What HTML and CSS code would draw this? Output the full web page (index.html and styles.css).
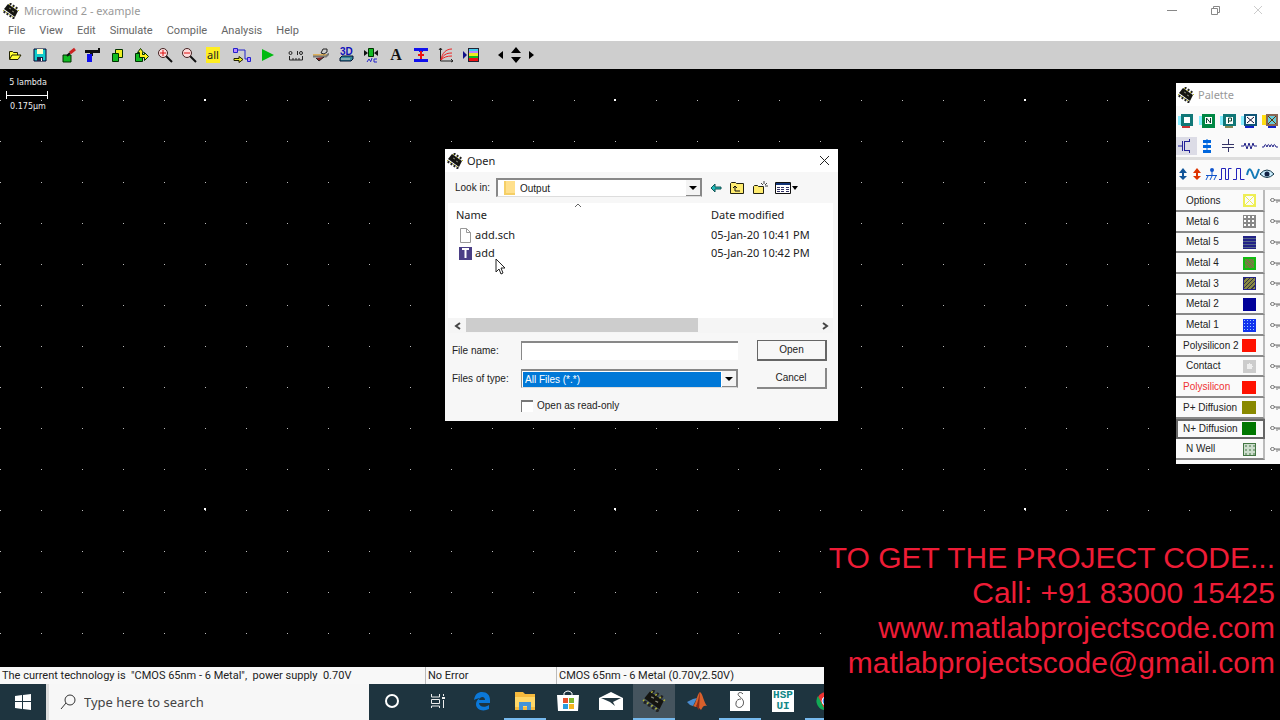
FILE: index.html
```html
<!DOCTYPE html>
<html lang="en">
<head>
    <meta charset="UTF-8">
    <meta name="viewport" content="width=device-width, initial-scale=1.0">
    <title>Microwind 2 - example</title>
    <link rel="stylesheet" href="styles.css">
</head>
<body>
    <svg class="defs" aria-hidden="true">
        <symbol id="chip" viewBox="0 0 16 16">
            <path d="M5 1l10 7-3 6L1 6z" fill="#141410"/>
            <path d="M7 2l1-2M10 4l1-2M13 6l1-2M2 8l-1 2M5 10l-1 2M8 12l-1 2M11 14l-1 2" stroke="#222" stroke-width="2"/>
            <path d="M6 2l1-1M9 4l1-1M12 6l1-1M15 8l1-1M1 7l-1 1M4 9l-1 1M7 11l-1 1M10 13l-1 1" stroke="#b9b92c"/>
            <path d="M6 5l2 1M9 8l2 1" stroke="#8a8a7a"/>
        </symbol>
        <symbol id="key" viewBox="0 0 10 8">
            <path d="M4 3h6M7 3v3M9 3v2" stroke="#777" fill="none"/>
            <ellipse cx="2.5" cy="3" rx="2" ry="1.500" stroke="#777" fill="none"/>
        </symbol>
    </svg>

    <div class="app">
        <div class="title-bar">
            <svg class="chip"><use href="#chip"/></svg>
            <span class="title">Microwind 2 - example</span>
            <div class="window-buttons">
                <button aria-label="Minimize"><svg width="11" height="11"><path d="M0 5.500h10" stroke="#888"/></svg></button>
                <button aria-label="Restore"><svg width="11" height="11" fill="none" stroke="#888"><path d="M1.500 3.500h6v6h-6zM3.500 3v-1.500h6v6H8"/></svg></button>
                <button aria-label="Close"><svg width="11" height="11"><path d="M1 1l8 8M9 1l-8 8" stroke="#ccc"/></svg></button>
            </div>
        </div>

        <nav class="menu-bar">
            <button>File</button>
            <button>View</button>
            <button>Edit</button>
            <button>Simulate</button>
            <button>Compile</button>
            <button>Analysis</button>
            <button>Help</button>
        </nav>

        <div class="toolbar">
            <div class="tools spaced">
                <button aria-label="Open"><svg viewBox="0 0 16 16"><path d="M2.500 12V4.500h3l1 1h4V8M2.500 12.500L5 8h9l-3 4.500z" fill="#ff3" stroke="#220"/></svg></button>
                <button aria-label="Save"><svg viewBox="0 0 16 16"><path d="M2 2h12v12H2z" fill="#1cc" stroke="#003"/><path d="M5 2h6v5H5z" fill="#ffc"/><path d="M5 10h6v4H5z" fill="#224"/><path d="M9 11h1v3H9z" fill="#fff"/></svg></button>
            </div>
            <div class="tools">
                <button aria-label="Draw box"><svg viewBox="0 0 16 16"><path d="M2 8h8v7H2z" fill="#1b2" stroke="#030"/><path d="M6 9l3-3" stroke="#111" stroke-width="2"/><path d="M9 6l5-4" stroke="#c22" stroke-width="3"/></svg></button>
                <button aria-label="Delete"><svg viewBox="0 0 16 16"><path d="M0 3h13V1h2v5H8v3H5V6H0z" fill="#111"/><path d="M2 7h5v8H2z" fill="#11e"/></svg></button>
                <button aria-label="Copy"><svg viewBox="0 0 16 16" stroke="#030"><path d="M6.500 2.500h7v8h-7z" fill="#ee2"/><path d="M3.500 6.500h6v8h-6z" fill="#1b2"/></svg></button>
                <button aria-label="Move"><svg viewBox="0 0 16 16" stroke="#030"><path d="M2.500 6.500h7v8h-7z" fill="#1b2"/><path d="M6.500 10.500v-5h-2l3-4 3 4h-1v2h2v-2l4 4-4 4v-3z" fill="#fe2"/></svg></button>
                <button aria-label="Zoom in"><svg viewBox="0 0 16 16"><path d="M9 9l6 6" stroke="#111" stroke-width="2"/><circle cx="6" cy="6" r="4.500" fill="#fdd" stroke="#422"/><path d="M3 6h6M6 3v6" stroke="#d11"/></svg></button>
                <button aria-label="Zoom out"><svg viewBox="0 0 16 16"><path d="M9 9l6 6" stroke="#111" stroke-width="2"/><circle cx="6" cy="6" r="4.500" fill="#fdd" stroke="#422"/><path d="M3 6h6" stroke="#d11"/></svg></button>
                <button class="view-all">all</button>
            </div>
            <div class="tools spaced">
                <button aria-label="Connect"><svg class="wide" viewBox="0 0 18 16" fill="none"><path d="M5 3h7v9h2" stroke="#22c"/><path d="M.500 1.500h4v4h-4zM14.500 10.500h3v4h-3z" fill="#b8f" stroke="#22c"/><path d="M1 11.500h5v-2l4 3-4 3v-2H1z" fill="#ee2" stroke="#220"/></svg></button>
                <button aria-label="Run"><svg viewBox="0 0 16 16"><path d="M3 2l12 6-12 6z" fill="#0b1"/></svg></button>
            </div>
            <div class="tools spaced">
                <button aria-label="Measure"><svg viewBox="0 0 16 16" fill="none" stroke="#222"><circle cx="2.500" cy="6" r="1.500"/><path d="M1.500 9v4h13V9M5 11v2M8 11v2M11 11v2M9.500 4v4"/><circle cx="13" cy="6" r="1.500"/></svg></button>
                <button aria-label="Cross section"><svg viewBox="0 0 16 16"><path d="M0 7h16l-3 3H0z" fill="#ddb05c"/><path d="M0 9.500h13l3-3" stroke="#777" stroke-width="2" fill="none"/><path d="M8 6l2-4h4v3l-3 2z" fill="#ccc" stroke="#222"/><path d="M3 11l3 3 5-4" fill="#822" stroke="#222"/></svg></button>
                <button aria-label="3D view"><svg viewBox="0 0 16 16"><path d="M2 11l2-2h11v3l-2 2H2z" fill="#389" stroke="#013"/><path d="M3 12h9" stroke="#ccc"/><text x="2" y="8" class="svg-3d">3D</text></svg></button>
                <button aria-label="Properties"><svg viewBox="0 0 16 16"><path d="M5.500 1.500h5v8h-5z" fill="#1b2" stroke="#030"/><path d="M1 3l4 3-4 3zM15 3l-4 3 4 3z" fill="#111"/><path d="M4 15l2-3 2 3M9 11l-1 3M14 12h-3v3h3" stroke="#22c" fill="none"/></svg></button>
                <button class="text-tool">A</button>
                <button aria-label="Via"><svg viewBox="0 0 16 16"><path d="M1 1h14v3h-5v1H6V4H1zM1 12h14v3H1z" fill="#11e"/><path d="M8 4v8M5 8h6" stroke="#e11" stroke-width="2"/></svg></button>
                <button aria-label="MOS curves"><svg viewBox="0 0 16 16" fill="none"><path d="M2.500 1v13H15M1 3l1.500-2L4 3M13 12l2 2-2 1" stroke="#222"/><path d="M3 13C4 6 8 2 14 2M3 13c2-5 5-7 11-7M3 13c3-3 6-4 11-4" stroke="#e22"/></svg></button>
                <button aria-label="Layers"><svg viewBox="0 0 16 16"><path d="M0 4l4 4-4 4z" fill="#118"/><path d="M5 1h11v14H5z" fill="#223"/><path d="M6 2h9v2H6z" fill="#4ce"/><path d="M6 4h9v2H6z" fill="#b8f"/><path d="M6 6h9v3H6z" fill="#ee2"/><path d="M6 9h9v2H6z" fill="#1b2"/><path d="M6 11h9v3H6z" fill="#e11"/></svg></button>
            </div>
            <div class="tools arrows">
                <button aria-label="Left"><svg viewBox="0 0 16 16"><path d="M11 4v8L6 8z"/></svg></button>
                <button aria-label="Up and down"><svg viewBox="0 0 16 16"><path d="M3 6l5-6 5 6zM3 10h10l-5 6z"/></svg></button>
                <button aria-label="Right"><svg viewBox="0 0 16 16"><path d="M5 4v8l5-4z"/></svg></button>
            </div>
        </div>

        <main class="canvas">
            <div class="scale">
                <span>5 lambda</span>
                <div class="ruler"></div>
                <span>0.175µm</span>
            </div>
        </main>

        <footer class="status-bar">
            <span class="technology">The current technology is &nbsp;"CMOS 65nm - 6 Metal", &nbsp;power supply &nbsp;0.70V</span>
            <span class="errors">No Error</span>
            <span>CMOS 65nm - 6 Metal (0.70V,2.50V)</span>
        </footer>

        <div class="taskbar">
            <button class="start" aria-label="Start"><svg width="16" height="16" fill="#fff"><path d="M0 2l7-1v6H0zM8 1l8-1v7H8zM0 8h7v7l-7-1zM8 8h8v8l-8-1z"/></svg></button>
            <label class="search">
                <svg width="16" height="16" fill="none" stroke="#333"><circle cx="10" cy="6" r="5"/><path d="M6 9l-5 6"/></svg>
                <input type="text" placeholder="Type here to search">
            </label>
            <div class="task-items">
                <button class="system" aria-label="Cortana"><svg width="16" height="16"><circle cx="8" cy="8" r="6" fill="none" stroke="#fff" stroke-width="2"/></svg></button>
                <button class="system" aria-label="Task view"><svg width="16" height="16" fill="none" stroke="#eee"><path d="M1.500 1v3h8V1M1.500 6.500h8v4h-8zM1.500 15v-2h8v2M13.500 1v2M13.500 7v8"/><path d="M12 5h3" stroke-width="2"/></svg></button>
                <button aria-label="Edge"><svg width="18" height="20" viewBox="0 0 18 20"><path d="M1 9C2 3 5 1 9 1c5 0 8 3 8 8v3H6c0 4 6 5 10 2v4c-6 3-13 1-13-5 0-3 2-5 4-6-2 0-4 1-6 2zM6 9h6c0-4-5-4-6 0z" fill="#0b78d8"/></svg></button>
                <button class="running" aria-label="File Explorer"><svg width="22" height="20"><path d="M1 1h8l2 2h10v16H1z" fill="#f6ba3d"/><path d="M1 6h20v10H1z" fill="#ffd767"/><path d="M5 19v-8h12v8h-4v-4H9v4z" fill="#4193d8"/></svg></button>
                <button aria-label="Store"><svg width="22" height="22"><path d="M7 6V3q4-4 8 0v3" fill="none" stroke="#fff" stroke-width="1"/><path d="M0 5h22l-1 16H1z" fill="#fff"/><path d="M6 8h5v5H6z" fill="#e8502c"/><path d="M12 8h5v5h-5z" fill="#7db72f"/><path d="M6 14h5v5H6z" fill="#2a9de0"/><path d="M12 14h5v5h-5z" fill="#f5b51f"/></svg></button>
                <button aria-label="Mail"><svg width="24" height="20"><path d="M0 7l12-6 12 6v12H0z" fill="#fff"/><path d="M2 7h20l-8 4 2 4-5-4z" fill="#223640"/></svg></button>
                <button class="running active" aria-label="Microwind"><svg width="24" height="22"><use href="#chip" width="24" height="22"/></svg></button>
                <button aria-label="Matlab"><svg width="20" height="20"><path d="M0 11l6-3 4-1-4 8-3-1z" fill="#4a8bd0"/><path d="M6 15c3-2 4-12 7-14 3 2 4 11 7 14-3-1-4 0-6 4-2-2-3-4-5-3z" fill="#d8602c"/><path d="M9 15c2-3 3-11 4-14l-1 18z" fill="#8c2d18"/></svg></button>
                <button class="running" aria-label="Editor"><svg width="22" height="22"><path d="M1 1h20v20H1z" fill="#fff"/><path d="M14 4c-2-3-7-1-4 2 5 4 5 6 4 9-2 4-8 3-7-2 0-3 3-4 5-4" stroke="#555" fill="none"/></svg></button>
                <button aria-label="HSPUI"><span class="hspui">HSP<br>UI</span></button>
                <button class="running" aria-label="Chrome"><svg width="20" height="20"><circle cx="10" cy="10" r="9" fill="#e33"/><path d="M2 5l6 12 2 2A9 9 0 0 1 2 5z" fill="#1a5"/><circle cx="10" cy="10" r="4" fill="#48e" stroke="#fff"/></svg></button>
            </div>
        </div>
    </div>

    <section class="palette">
        <div class="palette-title">
            <svg class="chip"><use href="#chip"/></svg>
            <span>Palette</span>
        </div>
        <div class="icons generators">
            <button aria-label="Contact"><svg viewBox="0 0 16 16"><path d="M0 3h4v9H0z" fill="#8ef"/><path d="M4 13h8v2H4z" fill="#c33"/><path d="M3 1h12v12H3z" fill="#177"/><path d="M6 4h6v6H6z" fill="#fff"/></svg></button>
            <button aria-label="N contact"><svg viewBox="0 0 16 16"><path d="M0 3h4v9H0z" fill="#8ef"/><path d="M3 1h13v14H3z" fill="#084"/><path d="M6 4h7v7H6z" fill="#fff"/><path d="M7.500 10V5l4 5V5" stroke="#143" fill="none"/></svg></button>
            <button aria-label="P contact"><svg viewBox="0 0 16 16"><path d="M0 3h4v9H0z" fill="#8ef"/><path d="M5 13h8v2H5z" fill="#885"/><path d="M3 1h13v12H3z" fill="#177"/><path d="M6 4h7v7H6z" fill="#fff"/><path d="M8.500 10V5h3v3h-3" stroke="#143" fill="none"/></svg></button>
            <button aria-label="Via"><svg viewBox="0 0 16 16"><path d="M0 3h4v9H0z" fill="#8ef"/><path d="M4 12h9v3H4z" fill="#12c"/><path d="M3 1h13v12H3z" fill="#157"/><path d="M5 3h9v8H5z" fill="#fff"/><path d="M6 4l7 6M13 4l-7 6" stroke="#113"/></svg></button>
            <button aria-label="Stacked via"><svg viewBox="0 0 16 16"><path d="M0 2h8v10H0z" fill="#fd1"/><path d="M6 12h8v3H6z" fill="#12c"/><path d="M4 1h12v12H4z" fill="#865"/><path d="M6 3h8v8H6z" fill="#6cd"/><path d="M6 3l8 8M14 3l-8 8" stroke="#630"/></svg></button>
        </div>
        <div class="icons devices">
            <button class="selected" aria-label="MOS"><svg viewBox="0 0 16 16"><path d="M0 8h4M4.500 3v10M6.500 3v10M7 3.500h5M7 12.500h5M11.500 1v3M11.500 12v3" fill="none" stroke="#229"/></svg></button>
            <button aria-label="Resistor"><svg viewBox="0 0 16 16"><path d="M4 2h8v3H4zM4 7h8v3H4zM4 12h8v3H4z" fill="#06d"/><path d="M8 1v14" stroke="#06d"/></svg></button>
            <button aria-label="Capacitor"><svg viewBox="0 0 16 16"><path d="M8.500 1v5M2 6.500h12M2 9.500h12M8.500 9v5" stroke="#336"/></svg></button>
            <button aria-label="Resistance"><svg viewBox="0 0 16 16"><path d="M0 8h3l1-3 2 6 2-6 2 6 2-6 1 3h3" stroke="#228" fill="none"/></svg></button>
            <button aria-label="Inductor"><svg viewBox="0 0 16 16"><path d="M0 9h2q1-5 3 0 1-5 3 0 1-5 3 0 1-5 3 0h2" stroke="#228" fill="none"/></svg></button>
        </div>
        <div class="icons sources">
            <button aria-label="Vdd minus"><svg viewBox="0 0 14 14"><path d="M7 1l4 5H3zM7 13l4-4H3z" fill="#159"/><path d="M7 5v6" stroke="#159" stroke-width="2"/></svg></button>
            <button aria-label="Vdd"><svg viewBox="0 0 14 14"><path d="M7 1l4 5H3zM7 13l4-4H3z" fill="#d30"/><path d="M7 5v6" stroke="#d30" stroke-width="2"/></svg></button>
            <button aria-label="Ground"><svg viewBox="0 0 14 14"><circle cx="8" cy="3" r="2" fill="#15c"/><path d="M8 4v5M2 8.500h11M4 9l-2 4M8 9l-2 4M12 9l-2 4" stroke="#15c"/></svg></button>
            <button aria-label="Clock"><svg viewBox="0 0 14 14"><path d="M1 12.500h2.500v-11h4v11h3v-11h3" stroke="#22b" fill="none"/></svg></button>
            <button aria-label="Pulse"><svg viewBox="0 0 14 14"><path d="M1 12.500h3.500v-11h4v11h4" stroke="#22b" fill="none"/></svg></button>
            <button aria-label="Sinus"><svg viewBox="0 0 14 14"><path d="M1 8c2-9 4-6 6 0s3 3 6-6" stroke="#147bb8" stroke-width="2" fill="none"/></svg></button>
            <button aria-label="Visible"><svg viewBox="0 0 14 14"><path d="M0 7q7-8 14 0-7 7-14 0z" fill="#cef" stroke="#134"/><circle cx="7" cy="7" r="2.500" fill="#124"/></svg></button>
        </div>
        <div class="layers">
            <div class="layer options"><button>Options<i class="swatch cross"></i></button><svg class="key"><use href="#key"/></svg></div>
            <div class="layer"><button>Metal 6<i class="swatch metal6"></i></button><svg class="key"><use href="#key"/></svg></div>
            <div class="layer"><button>Metal 5<i class="swatch metal5"></i></button><svg class="key"><use href="#key"/></svg></div>
            <div class="layer"><button>Metal 4<i class="swatch metal4"></i></button><svg class="key"><use href="#key"/></svg></div>
            <div class="layer"><button>Metal 3<i class="swatch metal3"></i></button><svg class="key"><use href="#key"/></svg></div>
            <div class="layer"><button>Metal 2<i class="swatch metal2"></i></button><svg class="key"><use href="#key"/></svg></div>
            <div class="layer"><button>Metal 1<i class="swatch metal1"></i></button><svg class="key"><use href="#key"/></svg></div>
            <div class="layer long"><button>Polysilicon 2<i class="swatch poly"></i></button><svg class="key"><use href="#key"/></svg></div>
            <div class="layer"><button>Contact<i class="swatch contact"></i></button><svg class="key"><use href="#key"/></svg></div>
            <div class="layer long red"><button>Polysilicon<i class="swatch poly"></i></button><svg class="key"><use href="#key"/></svg></div>
            <div class="layer long"><button>P+ Diffusion<i class="swatch pdiff"></i></button><svg class="key"><use href="#key"/></svg></div>
            <div class="layer long current"><button>N+ Diffusion<i class="swatch ndiff"></i></button><svg class="key"><use href="#key"/></svg></div>
            <div class="layer"><button>N Well<i class="swatch nwell"></i></button><svg class="key"><use href="#key"/></svg></div>
        </div>
    </section>

    <section class="dialog" role="dialog" aria-labelledby="dialog-title">
        <div class="dialog-title">
            <svg class="chip"><use href="#chip"/></svg>
            <span id="dialog-title">Open</span>
            <button aria-label="Close"><svg width="11" height="11"><path d="M1 1l9 9M10 1l-9 9" stroke="#222"/></svg></button>
        </div>
        <div class="look-in">
            <label for="folder">Look in:</label>
            <div class="combo">
                <svg width="14" height="16"><path d="M1 1h11v14H1z" fill="#f5cf66"/><path d="M3 1h9v12H3z" fill="#ffe08c"/></svg>
                <select id="folder"><option>Output</option></select>
                <span class="drop"></span>
            </div>
            <div class="folder-tools">
                <button aria-label="Back"><svg width="12" height="12"><path d="M1 6l4-4v3h6v2H5v3z" fill="#2bb" stroke="#155"/></svg></button>
                <button aria-label="Up one level"><svg width="16" height="14"><path d="M1.500 12.500v-10l1-1h4l1 1h7v10z" fill="#ffec70" stroke="#221"/><path d="M11 10H6V5M4 7l2-2 2 2" stroke="#111" fill="none"/></svg></button>
                <button aria-label="New folder"><svg width="16" height="14"><path d="M1.500 12.500v-7l1-1h3l1 1h5v7z" fill="#ffec70" stroke="#221"/><path d="M12 0v3M9 2l2 2M15 2l-2 2M13 5h3" stroke="#444"/></svg></button>
                <button aria-label="View menu"><svg width="24" height="14"><path d="M.500 1.500h15v11H.500z" fill="#fff" stroke="#111"/><path d="M1 2h14v2H1z" fill="#137"/><path d="M2 6.500h3M6 6.500h3M11 6.500h3M2 8.500h3M6 8.500h3M11 8.500h3M2 10.500h3M6 10.500h3M11 10.500h3" stroke="#336"/><path d="M17 5h6l-3 4z"/></svg></button>
            </div>
        </div>
        <div class="file-list">
            <svg class="sort" width="8" height="5"><path d="M1 4l3-3 3 3" fill="none" stroke="#666"/></svg>
            <table>
                <thead>
                    <tr><th>Name</th><th>Date modified</th></tr>
                </thead>
                <tbody>
                    <tr>
                        <td><div class="file"><svg width="13" height="15"><path d="M1.500.500h6l4 4v10h-10zM7.500.500v4h4" fill="#fff" stroke="#999"/></svg>add.sch</div></td>
                        <td>05-Jan-20 10:41 PM</td>
                    </tr>
                    <tr>
                        <td><div class="file"><svg width="13" height="15"><path d="M0 1h13v13H0z" fill="#4b3f86"/><path d="M3 3h7M6.500 3v9" stroke="#fff" stroke-width="2"/></svg>add</div></td>
                        <td>05-Jan-20 10:42 PM</td>
                    </tr>
                </tbody>
            </table>
            <div class="scroll-bar">
                <svg width="8" height="8"><path d="M6 1L2 4l4 3" fill="none" stroke="#444" stroke-width="2"/></svg>
                <div class="track"><div class="thumb"></div></div>
                <svg width="8" height="8"><path d="M2 1l4 3-4 3" fill="none" stroke="#444" stroke-width="2"/></svg>
            </div>
        </div>
        <form class="fields">
            <label for="file-name">File name:</label>
            <input type="text" id="file-name">
            <button type="button" class="push default">Open</button>
            <label for="file-type">Files of type:</label>
            <div class="combo type">
                <select id="file-type"><option>All Files (*.*)</option></select>
                <span class="drop"></span>
            </div>
            <button type="button" class="push">Cancel</button>
            <label class="read-only"><input type="checkbox">Open as read-only</label>
        </form>
        <svg class="cursor" width="12" height="18"><path d="M1 1v13l3-3 2 5 2-1-2-5h4z" fill="#fff" stroke="#222"/></svg>
    </section>

    <aside class="banner">
        TO GET THE PROJECT CODE...<br>
        Call: +91 83000 15425<br>
        www.matlabprojectscode.com<br>
        matlabprojectscode@gmail.com
    </aside>
</body>
</html>
```
FILE: styles.css
```css
* {
    box-sizing: border-box;
}
body {
    margin: 0;
    background-color: #000;
    font-family: "Noto Sans", "Open Sans", sans-serif;
    font-size: 11px;
    line-height: 16px;
    color: #222;
    overflow: hidden;
}
button, input, select {
    margin: 0;
    padding: 0;
    border: none;
    border-radius: 0;
    background: none;
    font: inherit;
    color: inherit;
}
svg {
    display: block;
    flex: none;
}
.defs {
    position: absolute;
    width: 0;
    height: 0;
}
.chip {
    width: 16px;
    height: 16px;
}
.app {
    display: flex;
    flex-direction: column;
    height: 100vh;
}

/* Title and menus */
.title-bar {
    display: flex;
    align-items: center;
    gap: 5px;
    height: 21px;
    padding-left: 3px;
    background-color: #fff;
    color: #999;
}
.window-buttons {
    display: flex;
    margin-left: auto;
}
.window-buttons button {
    display: flex;
    justify-content: center;
    width: 43px;
}
.menu-bar {
    display: flex;
    gap: 14px;
    height: 20px;
    padding-left: 8px;
    background-color: #fff;
    color: #666;
    font-family: Roboto, sans-serif;
}
.toolbar {
    display: flex;
    align-items: center;
    gap: 5px;
    height: 28px;
    padding-left: 3px;
    background-color: #cecece;
}
.tools {
    display: flex;
}
.tools.spaced {
    gap: 1px;
}
.tools button {
    display: flex;
    justify-content: center;
    align-items: center;
    width: 24px;
    height: 20px;
}
.tools svg {
    width: 16px;
    height: 16px;
}
.tools svg.wide {
    width: 18px;
}
.tools.arrows {
    margin-left: 4px;
}
.tools.arrows button {
    width: 16px;
}
.tools .view-all {
    width: 14px;
    height: 16px;
    margin: 2px 5px;
    background-color: #fe2;
}
.tools .text-tool {
    font-family: "Liberation Serif", serif;
    font-size: 16px;
    font-weight: bold;
    color: #111;
}
.svg-3d {
    font: bold 10px "Liberation Sans", sans-serif;
    fill: #11b;
}

/* Layout area: black masks leave one dot per 41px cell */
.canvas {
    flex: 1;
    background-color: #000;
    background-image:
        radial-gradient(circle at 1px 1px, #fff 1px, transparent 1px),
        linear-gradient(transparent 1px, #000 1px),
        linear-gradient(90deg, #bbb 1px, #000 1px);
    background-size: 410px 409px, 41px 41px, 41px 41px;
    background-position: 204px 30px, 41px 31px, 41px 31px;
}
.scale {
    width: 56px;
    padding-top: 6px;
    text-align: center;
    font-family: "DejaVu Sans", sans-serif;
    font-size: 8px;
    color: #eee;
}
.scale span {
    display: block;
}
.ruler {
    height: 8px;
    margin: 0 8px 0 6px;
    border: 1px solid #fff;
    border-width: 0 1px;
    background: linear-gradient(#fff, #fff) center / 100% 1px no-repeat;
}
.status-bar {
    display: flex;
    height: 17px;
    padding-left: 2px;
    background-color: #f8f8f8;
    font-family: Roboto, sans-serif;
    line-height: 18px;
}
.status-bar span {
    padding-left: 2px;
    border-left: 1px solid #bbb;
    white-space: nowrap;
}
.status-bar .technology {
    width: 423px;
    padding-left: 0;
    border: none;
}
.status-bar .errors {
    width: 131px;
}

/* Windows taskbar */
.taskbar {
    display: flex;
    height: 36px;
    background-color: #1e343f;
}
.start {
    display: flex;
    align-items: center;
    justify-content: center;
    width: 46px;
}
.search {
    display: flex;
    align-items: center;
    gap: 8px;
    width: 323px;
    padding-left: 11px;
    background-color: #f7f7f7;
    border-left: 3px solid #ddd;
}
.search input {
    flex: 1;
    min-width: 0;
    font-size: 13px;
}
.search input::placeholder {
    color: #444;
    opacity: 1;
}
.task-items {
    display: flex;
    gap: 1px;
}
.task-items button {
    display: flex;
    justify-content: center;
    align-items: center;
    width: 42px;
    border-bottom: 2px solid transparent;
}
.task-items .system {
    width: 45px;
}
.task-items .running {
    border-color: #76b9ed;
}
.task-items .active {
    background-color: #45545e;
}
.hspui {
    width: 22px;
    background-color: #fff;
    color: #188;
    font: bold 11px/11px "Liberation Mono", monospace;
}

/* Palette window */
.palette {
    position: absolute;
    top: 83px;
    right: 0;
    width: 104px;
    padding-bottom: 4px;
    background-color: #fafafa;
}
.palette-title {
    display: flex;
    align-items: center;
    gap: 4px;
    height: 23px;
    padding-left: 2px;
    background-color: #fff;
    color: #999;
}
.icons {
    display: flex;
    align-items: center;
}
.icons button {
    display: flex;
    justify-content: center;
    align-items: center;
    width: 21px;
    height: 18px;
}
.icons svg {
    width: 16px;
    height: 16px;
}
.generators {
    height: 29px;
}
.devices {
    height: 22px;
}
.devices .selected {
    background-color: #dcdce6;
}
.sources {
    height: 33px;
    border: 3px solid #ddd;
    border-width: 3px 0;
}
.sources button {
    width: 14px;
}
.sources svg {
    width: 14px;
    height: 14px;
}
.layers {
    display: grid;
    grid-template-rows: 22px;
    grid-auto-rows: 1fr;
    height: 270px;
    font-family: "Liberation Sans", sans-serif;
    font-size: 10px;
}
.layer {
    display: flex;
    align-items: center;
    gap: 5px;
    overflow: hidden;
}
.layer button {
    display: flex;
    justify-content: space-between;
    align-items: center;
    flex: none;
    width: 89px;
    height: 100%;
    padding: 1px 7px 0 10px;
    border: 1px solid #888;
    border-width: 0 2px 2px 0;
    border-right-color: #bbb;
    white-space: nowrap;
}
.layer.long button {
    padding-left: 7px;
}
.layer.red button {
    color: #e33;
}
.layer.current button {
    border: 2px solid #666;
    padding: 0 7px 0 5px;
}
.key {
    width: 10px;
    height: 8px;
}
.swatch {
    width: 13px;
    height: 13px;
}
.long .swatch {
    width: 14px;
}
.cross {
    border: 2px solid #ee5;
    background: linear-gradient(45deg, transparent 45%, #ee5 45% 55%, transparent 55%), linear-gradient(-45deg, transparent 45%, #ee5 45% 55%, transparent 55%);
}
.metal6 {
    background: radial-gradient(#fff 1px, #888 1px) 0 0 / 4px 4px;
}
.metal5 {
    background: repeating-linear-gradient(#228 0 2px, #568 2px 3px);
}
.metal4 {
    border: 2px solid #1b1;
    background: repeating-linear-gradient(45deg, #774 0 2px, #4a2 2px 3px);
}
.metal3 {
    border: 1px solid #228;
    background: repeating-linear-gradient(-45deg, #884 0 2px, #334 2px 3px);
}
.metal2 {
    background-color: #009;
}
.metal1 {
    background: radial-gradient(#9cf 1px, #13e 1px) 0 0 / 3px 3px;
}
.poly {
    background-color: #f10;
}
.contact {
    background: radial-gradient(#eee 3px, #ccc 3px);
}
.pdiff {
    background-color: #880;
}
.ndiff {
    background-color: #070;
}
.nwell {
    border: 1px solid #474;
    background: radial-gradient(#8a8 1px, #cdc 1px) 0 0 / 4px 4px;
}

/* Open dialog */
.dialog {
    position: absolute;
    top: 149px;
    left: 445px;
    width: 393px;
    padding-bottom: 7px;
    background-color: #f7f7f7;
}
.dialog-title {
    display: flex;
    align-items: center;
    gap: 4px;
    height: 23px;
    padding: 0 8px 0 2px;
    background-color: #fff;
}
.dialog-title button {
    margin-left: auto;
}
.look-in {
    display: flex;
    align-items: center;
    height: 31px;
    padding-left: 10px;
    font-family: "Liberation Sans", sans-serif;
    font-size: 10px;
}
.look-in label {
    width: 41px;
}
.combo {
    display: flex;
    align-items: center;
    width: 206px;
    height: 19px;
    padding-left: 5px;
    border: 2px solid #888;
    border-right-width: 1px;
    border-bottom: 1px solid #ddd;
    background-color: #fff;
}
.combo select {
    flex: 1;
    height: 15px;
    padding-left: 3px;
    appearance: none;
}
.drop {
    display: flex;
    align-items: center;
    justify-content: center;
    width: 15px;
    height: 100%;
    border: 1px solid #888;
    border-width: 0 1px 1px 0;
    background-color: #f4f4f4;
}
.drop::before {
    content: "";
    border: 4px solid transparent;
    border-top-color: #000;
    border-bottom: none;
}
.folder-tools {
    display: flex;
    align-items: center;
    gap: 7px;
    padding-left: 8px;
}
.file-list {
    position: relative;
    margin: 0 5px 0 3px;
    background-color: #fff;
}
.sort {
    position: absolute;
    top: 0;
    left: 126px;
}
.file-list table {
    width: 100%;
    margin-bottom: 56px;
    border-collapse: collapse;
    table-layout: fixed;
}
.file-list th, .file-list td {
    height: 18px;
    padding: 0;
    text-align: left;
    font-weight: normal;
    line-height: 18px;
    white-space: nowrap;
}
.file-list th {
    height: 23px;
    padding-left: 8px;
}
.file-list th:last-child, .file-list td:last-child {
    width: 122px;
    padding-left: 0;
}
.file {
    display: flex;
    align-items: center;
    gap: 3px;
    padding-left: 11px;
}
.scroll-bar {
    display: flex;
    align-items: center;
    gap: 4px;
    height: 15px;
    padding: 0 4px 0 6px;
    background-color: #f5f5f5;
}
.track {
    flex: 1;
    height: 100%;
}
.thumb {
    width: 66%;
    height: 14px;
    background-color: #cdcdcd;
}
.fields {
    display: grid;
    grid-template-columns: 69px 217px 70px;
    row-gap: 7px;
    align-items: center;
    margin-top: 7px;
    padding-left: 7px;
    font-family: "Liberation Sans", sans-serif;
    font-size: 10px;
}
.fields input[type="text"] {
    height: 19px;
    padding-left: 3px;
    border: 1px solid #888;
    border-width: 2px 0 0 1px;
    background-color: #fff;
}
.combo.type {
    width: 100%;
    padding-left: 0;
    border-left-width: 1px;
}
.type select {
    margin: 0 1px;
    padding-left: 2px;
    background-color: #0078d7;
    color: #fff;
}
.push {
    width: 70px;
    height: 21px;
    margin-left: 19px;
    border: 1px solid #888;
    border-width: 0 2px 2px 0;
}
.push.default {
    border: 1px solid #666;
    border-width: 1px 2px 2px 1px;
}
.read-only {
    display: flex;
    align-items: center;
    gap: 4px;
    grid-column: 2;
    padding-top: 2px;
}
.read-only input {
    width: 12px;
    height: 12px;
    border: 1px solid #777;
    border-width: 2px 0 0 1px;
    background-color: #fff;
    appearance: none;
}
.cursor {
    position: absolute;
    top: 109px;
    left: 50px;
}

/* Contact banner */
.banner {
    position: absolute;
    right: 0;
    bottom: 0;
    width: 456px;
    padding: 0 5px 40px 0;
    background-color: #000;
    color: #ee1c36;
    font-family: "Liberation Sans", sans-serif;
    font-size: 30px;
    line-height: 35px;
    text-align: right;
    white-space: nowrap;
}
```
